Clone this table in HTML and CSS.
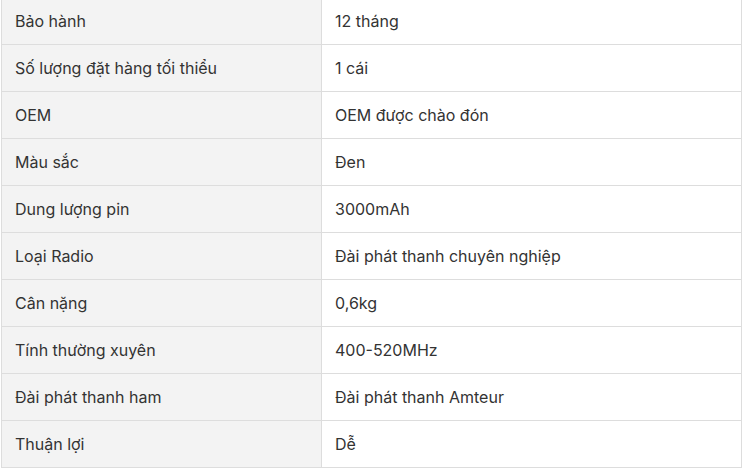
FILE: index.html
```html
<!DOCTYPE html>
<html lang="vi">
<head>
<meta charset="utf-8">
<link rel="stylesheet" href="styles.css">
</head>
<body>
<table class="spec">
<tbody>
<tr><td class="k">Bảo hành</td><td class="v">12 tháng</td></tr>
<tr><td class="k">Số lượng đặt hàng tối thiểu</td><td class="v">1 cái</td></tr>
<tr><td class="k">OEM</td><td class="v">OEM được chào đón</td></tr>
<tr><td class="k">Màu sắc</td><td class="v">Đen</td></tr>
<tr><td class="k">Dung lượng pin</td><td class="v">3000mAh</td></tr>
<tr><td class="k">Loại Radio</td><td class="v">Đài phát thanh chuyên nghiệp</td></tr>
<tr><td class="k">Cân nặng</td><td class="v">0,6kg</td></tr>
<tr><td class="k">Tính thường xuyên</td><td class="v">400-520MHz</td></tr>
<tr><td class="k">Đài phát thanh ham</td><td class="v">Đài phát thanh Amteur</td></tr>
<tr><td class="k">Thuận lợi</td><td class="v">Dễ</td></tr>
</tbody>
</table>
</body>
</html>
```
FILE: styles.css
```css
html, body { margin: 0; padding: 0; background: #fff; }
body { padding-left: 1px; }
.spec {
  border-collapse: collapse;
  width: 741px;
  margin-top: -3px;
  font-family: Inter, "Noto Sans", sans-serif;
  font-size: 16px;
  color: #333;
  table-layout: fixed;
}
.spec td {
  border: 1px solid #ddd;
  height: 47px;
  padding: 0 13px;
  box-sizing: border-box;
  vertical-align: middle;
}
.spec .k { width: 320px; background: #f3f3f3; }
.spec .v { background: #fff; }
```
